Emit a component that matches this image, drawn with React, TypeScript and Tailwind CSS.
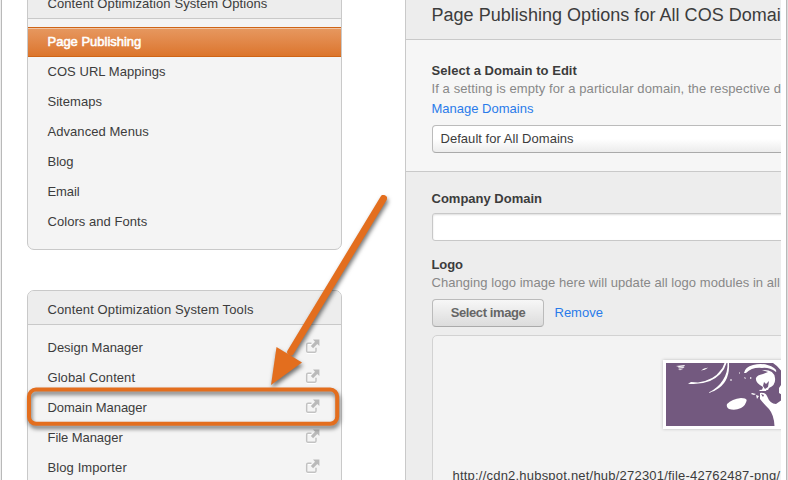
import React from "react";

const options = [
  { label: "COS URL Mappings", track: "tracking-[0.05px]" },
  { label: "Sitemaps", track: "tracking-[0.03px]" },
  { label: "Advanced Menus", track: "tracking-[0.06px]" },
  { label: "Blog", track: "tracking-[0px]" },
  { label: "Email", track: "tracking-[-0.1px]" },
  { label: "Colors and Fonts", track: "tracking-[0.05px]" },
];

const tools = [
  { label: "Design Manager", track: "tracking-[0px]" },
  { label: "Global Content", track: "tracking-[0.06px]" },
  { label: "Domain Manager", track: "tracking-[-0.03px]" },
  { label: "File Manager", track: "tracking-[-0.06px]" },
  { label: "Blog Importer", track: "tracking-[0.1px]" },
];

function ExternalIcon() {
  return (
    <svg width="16" height="16" viewBox="0 0 16 16" fill="none" className="mb-0.5 mr-5">
      <path d="M6.5 5.2H3Q1.7 5.2 1.7 6.5V12.9Q1.7 14.2 3 14.2H9.7Q11 14.2 11 12.9V9.8" stroke="#fff" strokeWidth="1.5" />
      <path d="M6.5 4.2H3Q1.7 4.2 1.7 5.5V11.9Q1.7 13.2 3 13.2H9.7Q11 13.2 11 11.9V8.8" stroke="#c2c2c2" strokeWidth="1.5" />
      <path d="M8 .6H14.4V7L12.3 5L8.1 9.2L5.9 7L10 2.8Z" fill="#bababa" />
    </svg>
  );
}

function LogoArt() {
  return (
    <svg width="152" height="63" viewBox="0 0 152 63" className="block">
      <rect width="152" height="63" fill="#73597f" />
      <g fill="#fff">
        <path d="M10 3L19 2L18 3.4L13 4ZM12 4.5L18.6 4L17 5.2L13 5.4ZM12 6.4L17 6L14 7.2ZM35 7.5Q38 4.5 42 4.7Q39 7.3 35 7.5Z" />
        <path d="M58.5 0H60.5Q57 12 44 18Q34 22 22 20.8L25 19L32 19.5Q48 17 54 8Q57 5 58.5 0Z" />
        <path d="M61.5 0H63Q64 17 53 25Q48 29 42 30Q52 25 57 17Q62 9 61.5 0Z" />
        <path d="M61 41Q66 36 75 35Q80 35 80.7 37Q80 42 75 45Q69 48 63 46Q60 44 61 41Z" />
        <path d="M78 10Q79 4 87 2Q99-1 108 5Q111 7 110 9Q103 4 96 5Q86 4 80 10Z" />
        <path d="M90 15Q91 12 97 11L102 9L96 7Q108 6 109 15Q110 22 103 25L102 27H96L97 24Q89 20 90 15Z" />
        <path d="M107 0H116V9Q112 3 107 0ZM93 27L101 26L100 28L94 28ZM94 30Q99 29 101 33Q104 41 110 41L117 36V63H108.5Q108 52 103 46Q97 40 94 36ZM115 22L113 25V30L116 32Z" />
        <path d="M64 17L65 16L66 17L65 18ZM73 9L74 10L73 11ZM78 15L79 14L80 16ZM84 14L86 15L84 16ZM86 30L90 31L88 32L85 31ZM90 32L93 33L91 36Z" />
      </g>
      <g fill="#73597f">
        <path d="M98 19L100 21L103 18L102 24L99 26L97 23ZM95 31L98 32L97 34Z" />
      </g>
    </svg>
  );
}

function PanelHeader({ children, className }: { children: React.ReactNode; className: string }) {
  return (
    <div className="flex h-[34px] shrink-0 items-center border-b border-[#c9c9c9] bg-[#ededed] pl-[19.5px] pt-[5px]">
      <span className={className}>{children}</span>
    </div>
  );
}

function Annotation() {
  return (
    <svg width="788" height="480" className="pointer-events-none absolute left-0 top-0 [filter:drop-shadow(1px_3px_2px_rgba(0,0,0,.55))]">
      <rect x="29" y="389.6" width="308.2" height="34.2" rx="7" fill="none" stroke="#e36e1e" strokeWidth="4" />
      <path d="M383.5 198.5L290.7 352" stroke="#e36e1e" strokeWidth="7" strokeLinecap="round" />
      <path d="M271 385L276.5 347L302 362.5Z" fill="#e36e1e" />
    </svg>
  );
}

export default function App() {
  return (
    <div className="relative flex h-[480px] w-[788px] overflow-hidden whitespace-nowrap bg-white font-['Liberation_Sans',Arial,sans-serif] text-[13px] leading-4 text-[#3c3c3c]">
      <div className="w-0.5 shrink-0 border-r border-[#b9b9b9] bg-[#eee]" />
      <aside className="ml-[25px] flex w-[315px] shrink-0 flex-col gap-10">
        <section className="-mt-4 flex h-[266px] shrink-0 flex-col overflow-hidden rounded-[7px] border border-[#c9c9c9] bg-[#f4f4f4]">
          <PanelHeader className="tracking-[0.09px]">Content Optimization System Options</PanelHeader>
          <nav className="pt-2">
            <div className="flex h-[30px] flex-col bg-[#cf6416] py-px">
              <div className="h-px bg-[#f0c4a3]" />
              <div className="flex flex-1 items-center bg-linear-to-b from-[#e6975e] to-[#dc752b] pb-0.5 pl-[19.5px] text-white [-webkit-text-stroke:0.55px_white]">
                <span className="tracking-[-0.01px]">Page Publishing</span>
              </div>
            </div>
            {options.map((o) => (
              <div key={o.label} className="flex h-[30px] items-center pl-[19.5px]">
                <span className={o.track}>{o.label}</span>
              </div>
            ))}
          </nav>
        </section>
        <section className="flex h-[240px] shrink-0 flex-col overflow-hidden rounded-[7px] border border-[#c9c9c9] bg-[#f4f4f4]">
          <PanelHeader className="tracking-[0.12px]">Content Optimization System Tools</PanelHeader>
          <nav className="pt-2">
            {tools.map((t) => (
              <div key={t.label} className="flex h-[30px] items-center justify-between pl-[19.5px]">
                <span className={t.track}>{t.label}</span>
                <ExternalIcon />
              </div>
            ))}
          </nav>
        </section>
      </aside>
      <main className="ml-[63px] flex w-[376px] shrink-0 flex-col overflow-hidden border-l border-[#c9c9c9] bg-[#ededed]">
        <header className="h-10 shrink-0 border-b border-[#c9c9c9] pl-[25.5px] pt-1">
          <h1 className="text-[18px] leading-[22px]"><span className="tracking-[0.03px]">Page Publishing Options for All COS Domains</span></h1>
        </header>
        <section className="flex h-[132px] shrink-0 flex-col border-b border-[#c9c9c9] bg-[#f6f6f6] pl-[25.5px] pt-[23px]">
          <h2 className="font-bold"><span className="tracking-[0.04px]">Select a Domain to Edit</span></h2>
          <p className="mt-0.5 text-[#888]"><span className="tracking-[0.09px]">If a setting is empty for a particular domain, the respective default</span></p>
          <a className="mt-1 text-[#2a7bea]"><span className="tracking-[0px]">Manage Domains</span></a>
          <div className="ml-[0.5px] mt-2 flex h-7 w-[420px] items-center rounded border border-[#bbb] border-b-[#aaa] bg-linear-to-b from-white from-50% to-[#ececec] pl-[7.5px]">
            <span className="tracking-[0.04px]">Default for All Domains</span>
          </div>
        </section>
        <section className="flex shrink-0 flex-col pl-[25.5px] pt-[19px]">
          <h2 className="font-bold"><span className="tracking-[0px]">Company Domain</span></h2>
          <div className="ml-[0.5px] mt-1.5 h-7 w-[420px] rounded-[3px] border border-[#c8c8c8] bg-white shadow-[inset_0_1px_2px_#ddd]" />
          <h2 className="mt-4 font-bold"><span className="tracking-[-0.1px]">Logo</span></h2>
          <p className="mt-0.5 text-[#888]"><span className="tracking-[0.05px]">Changing logo image here will update all logo modules in all</span></p>
          <div className="ml-[0.5px] mt-2 flex items-center">
            <button className="h-7 w-28 rounded border border-[#bbb] border-b-[#aaa] bg-linear-to-b from-[#f7f7f7] to-[#dcdcdc] font-bold text-[#666]"><span className="tracking-[-0.4px]">Select image</span></button>
            <a className="ml-[10.5px] text-[#2a7bea]"><span className="tracking-[0px]">Remove</span></a>
          </div>
          <div className="ml-[0.5px] mt-2 h-[160px] w-[420px] rounded-[5px] border border-[#d2d2d2] bg-[#f3f3f3] pl-[19.5px] pt-6">
            <div className="ml-[210.5px] w-[158px] border-3 border-white shadow-[0_0_3px_#bbb]"><LogoArt /></div>
            <p className="mt-[39px]"><span className="tracking-[0.21px]">http://cdn2.hubspot.net/hub/272301/file-42762487-png/</span></p>
          </div>
        </section>
      </main>
      <div className="ml-[5px] w-0.5 shrink-0 border-l border-[#b9b9b9] bg-[#ddd]" />
      <Annotation />
    </div>
  );
}
